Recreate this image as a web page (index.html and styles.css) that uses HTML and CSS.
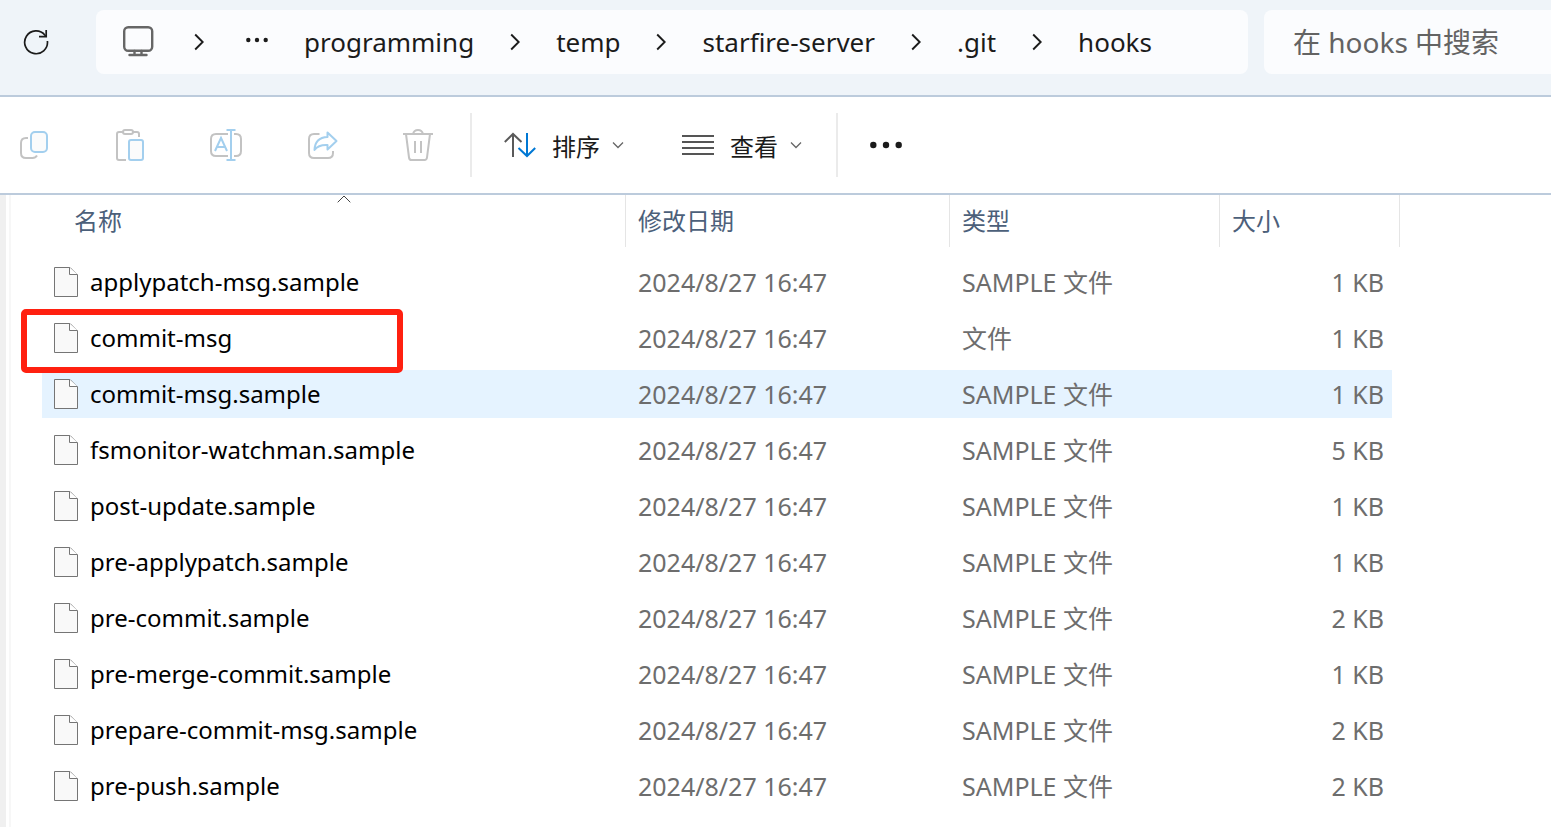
FILE: index.html
```html
<!DOCTYPE html>
<html lang="zh-CN">
<head>
  <meta charset="UTF-8">
  <meta name="viewport" content="width=device-width, initial-scale=1.0">
  <title>hooks</title>
  <link rel="stylesheet" href="styles.css">
</head>
<body>
  <!-- shared icons -->
  <svg class="defs" width="0" height="0" aria-hidden="true">
    <symbol id="chevron" viewBox="0 0 10 18"><path d="M1.2 1.500L8.700 9L1.200 16.500" fill="none" stroke="#1b1b1b" stroke-width="1.900"/></symbol>
    <symbol id="down" viewBox="0 0 12 8"><path d="M1 1.5L6 6.5L11 1.5" fill="none" stroke="#666" stroke-width="1.3"/></symbol>
    <symbol id="file" viewBox="0 0 24 30"><path d="M.5 .5H16L23.500 8V29.500H.5Z" fill="#f9f9f9" stroke="#757575"/><path d="M15.500 .5V7.500H23.500" fill="#fff" stroke="#757575"/></symbol>
  </svg>

  <header class="topbar">
    <button class="refresh" aria-label="刷新">
      <svg width="26" height="26" viewBox="0 0 26 26" fill="none" stroke="#1b1b1b" stroke-width="1.700"><path d="M24.400 12A11.400 11.400 0 1 1 22 6.200L23 7.400"/><path d="M23.200 1V7.700H16"/></svg>
    </button>
    <nav class="address">
      <svg class="pc" width="32" height="32" viewBox="0 0 32 32" fill="none" stroke="#666" stroke-width="2.400" stroke-linecap="round"><rect x="2.200" y="1.200" width="28" height="23.500" rx="4"/><path d="M12.500 25V29M19.500 25V29M7.500 29H24.500"/></svg>
      <svg width="10" height="18"><use href="#chevron"/></svg>
      <button class="dots" aria-label="更多路径"><svg width="22" height="10" viewBox="0 0 22 10" fill="#1b1b1b"><circle cx="2.300" cy="3" r="2.200"/><circle cx="11" cy="3" r="2.200"/><circle cx="19.700" cy="3" r="2.200"/></svg></button>
      <a href="#">programming</a>
      <svg width="10" height="18"><use href="#chevron"/></svg>
      <a href="#">temp</a>
      <svg width="10" height="18"><use href="#chevron"/></svg>
      <a href="#">starfire-server</a>
      <svg width="10" height="18"><use href="#chevron"/></svg>
      <a href="#">.git</a>
      <svg width="10" height="18"><use href="#chevron"/></svg>
      <a href="#">hooks</a>
    </nav>
    <input class="search" type="text" aria-label="搜索" placeholder="在 hooks 中搜索">
  </header>

  <div class="toolbar">
    <div class="tools">
      <button aria-label="复制">
        <svg width="32" height="32" viewBox="0 0 32 32" fill="none" stroke-width="2"><path d="M10 9H8Q3 9 3 14V24Q3 29 8 29H14.500Q17.500 29 19 26.500" stroke="#c3c3c3"/><rect x="13" y="3" width="16" height="20" rx="4" fill="#fbfbfb" stroke="#a3cfee"/></svg>
      </button>
      <button aria-label="粘贴">
        <svg width="32" height="32" viewBox="0 0 32 32" fill="none" stroke-width="2"><path d="M9 3H5Q3 3 3 5V29Q3 31 5 31H12M19 3H23Q25 3 25 5V8" stroke="#c3c3c3"/><rect x="9" y="1" width="10" height="4" rx="2" fill="#fff" stroke="#c3c3c3"/><rect x="15" y="11" width="14" height="20" rx="2" fill="#fbfbfb" stroke="#a3cfee"/></svg>
      </button>
      <button aria-label="重命名">
        <svg width="32" height="32" viewBox="0 0 32 32" fill="none" stroke-width="2"><path d="M18 5H6Q1 5 1 10V22Q1 27 6 27H18M24 5H26Q31 5 31 10V22Q31 27 26 27H24" stroke="#c3c3c3"/><path d="M21 1V31M16.500 1H25.500M16.500 31H25.500M5 22L11 9L17 22M7 18H15" stroke="#a3cfee"/></svg>
      </button>
      <button aria-label="共享">
        <svg width="32" height="32" viewBox="0 0 32 32" fill="none" stroke-width="2"><path d="M13.500 5H8Q3 5 3 10V24Q3 29 8 29H22Q27 29 27 24V22" stroke="#c3c3c3"/><path d="M21.500 3.500L30.500 12L21.500 20.500V16Q12.500 15.500 8.500 21Q9 8.500 21.500 8Z" stroke="#a3cfee" stroke-linejoin="round"/></svg>
      </button>
      <button aria-label="删除">
        <svg width="32" height="32" viewBox="0 0 32 32" fill="none" stroke="#c3c3c3" stroke-width="2"><path d="M1 5H31M4 5L7 28.500Q7.300 31 9.500 31H22.500Q24.700 31 25 28.500L28 5M11 5Q12 1 16 1Q20 1 21 5M13 12V24M19 12V24"/></svg>
      </button>
    </div>
    <div class="menus">
      <button class="menu">
        <svg width="32" height="26" viewBox="0 0 32 26" fill="none" stroke-width="2"><path d="M9 25V2M.8 10L9 2L17.500 10" stroke="#5a5a5a"/><path d="M23 1V24M14.500 16L23 24L31.200 16" stroke="#0078d4"/></svg>
        <span>排序</span>
        <svg width="12" height="8"><use href="#down"/></svg>
      </button>
      <button class="menu">
        <svg width="32" height="22" viewBox="0 0 32 22" fill="none" stroke="#555" stroke-width="2"><path d="M0 2H32M0 8H32M0 14H32M0 20H32"/></svg>
        <span>查看</span>
        <svg width="12" height="8"><use href="#down"/></svg>
      </button>
    </div>
    <button class="more" aria-label="更多">
      <svg width="32" height="8" viewBox="0 0 32 8" fill="#1b1b1b"><circle cx="3.300" cy="4" r="3.200"/><circle cx="16" cy="4" r="3.200"/><circle cx="28.700" cy="4" r="3.200"/></svg>
    </button>
  </div>

  <main class="content">
    <div class="splitter"></div>
    <div class="list">
      <table class="files">
        <colgroup><col><col class="col-date"><col class="col-type"><col class="col-size"></colgroup>
        <thead>
          <tr>
            <th><div class="head head-name">名称<svg class="sort" width="14" height="8" viewBox="0 0 14 8" fill="none" stroke="#444"><path d="M.7 7.300L7 1L13.300 7.300"/></svg></div></th>
            <th><div class="head">修改日期</div></th>
            <th><div class="head">类型</div></th>
            <th><div class="head">大小</div></th>
          </tr>
        </thead>
        <tbody>
          <tr><td><div class="name"><svg width="24" height="30"><use href="#file"/></svg>applypatch-msg.sample</div></td><td>2024/8/27 16:47</td><td>SAMPLE 文件</td><td>1 KB</td></tr>
          <tr class="marked"><td><div class="name"><svg width="24" height="30"><use href="#file"/></svg>commit-msg</div></td><td>2024/8/27 16:47</td><td>文件</td><td>1 KB</td></tr>
          <tr class="hover"><td><div class="name"><svg width="24" height="30"><use href="#file"/></svg>commit-msg.sample</div></td><td>2024/8/27 16:47</td><td>SAMPLE 文件</td><td>1 KB</td></tr>
          <tr><td><div class="name"><svg width="24" height="30"><use href="#file"/></svg>fsmonitor-watchman.sample</div></td><td>2024/8/27 16:47</td><td>SAMPLE 文件</td><td>5 KB</td></tr>
          <tr><td><div class="name"><svg width="24" height="30"><use href="#file"/></svg>post-update.sample</div></td><td>2024/8/27 16:47</td><td>SAMPLE 文件</td><td>1 KB</td></tr>
          <tr><td><div class="name"><svg width="24" height="30"><use href="#file"/></svg>pre-applypatch.sample</div></td><td>2024/8/27 16:47</td><td>SAMPLE 文件</td><td>1 KB</td></tr>
          <tr><td><div class="name"><svg width="24" height="30"><use href="#file"/></svg>pre-commit.sample</div></td><td>2024/8/27 16:47</td><td>SAMPLE 文件</td><td>2 KB</td></tr>
          <tr><td><div class="name"><svg width="24" height="30"><use href="#file"/></svg>pre-merge-commit.sample</div></td><td>2024/8/27 16:47</td><td>SAMPLE 文件</td><td>1 KB</td></tr>
          <tr><td><div class="name"><svg width="24" height="30"><use href="#file"/></svg>prepare-commit-msg.sample</div></td><td>2024/8/27 16:47</td><td>SAMPLE 文件</td><td>2 KB</td></tr>
          <tr><td><div class="name"><svg width="24" height="30"><use href="#file"/></svg>pre-push.sample</div></td><td>2024/8/27 16:47</td><td>SAMPLE 文件</td><td>2 KB</td></tr>
        </tbody>
      </table>
    </div>
  </main>
</body>
</html>
```
FILE: styles.css
```css
* {
  box-sizing: border-box;
}
body {
  margin: 0;
  min-height: 100vh;
  display: flex;
  flex-direction: column;
  background: #fff;
  color: #1b1b1b;
  font-family: "Noto Sans", "Noto Sans CJK SC", sans-serif;
  font-size: 25px;
}
.defs {
  position: absolute;
}
svg {
  flex-shrink: 0;
}
button {
  display: flex;
  align-items: center;
  padding: 0;
  border: none;
  background: none;
  color: inherit;
  font: inherit;
  cursor: pointer;
}

/* address bar */
.topbar {
  display: flex;
  height: 97px;
  padding: 10px 0 21px 23px;
  background: #eff4f9;
  border-bottom: 2px solid #bccbdc;
}
.refresh {
  margin-right: 47px;
}
.address {
  flex: 1;
  display: flex;
  align-items: center;
  gap: 36px;
  padding-left: 26px;
  background: #fbfcfe;
  border-radius: 8px;
  font-size: 26px;
  white-space: nowrap;
}
.address a {
  color: inherit;
  text-decoration: none;
}
.pc {
  margin-right: 4px;
}
.dots {
  margin-left: 6px;
}
.search {
  width: 287px;
  margin-left: 16px;
  padding: 0 0 0 29px;
  border: none;
  border-radius: 8px 0 0 8px;
  background: #fbfcfe;
  font-family: inherit;
  font-size: 28px;
}
.search::placeholder {
  color: #636363;
  opacity: 1;
}

/* toolbar */
.toolbar {
  display: flex;
  align-items: center;
  height: 98px;
  padding-left: 18px;
  border-bottom: 2px solid #bccbdc;
}
.tools {
  display: flex;
  gap: 64px;
  padding-right: 36px;
}
.menus {
  display: flex;
  align-items: center;
  gap: 58px;
  height: 64px;
  padding: 0 34px 0 32px;
  border-left: 2px solid #ebebeb;
  border-right: 2px solid #ebebeb;
}
.menu {
  gap: 12px;
  font-size: 24px;
}
.menu span {
  margin-left: 4px;
}
.more {
  margin-left: 32px;
}

/* file list */
.content {
  flex: 1;
  display: flex;
}
.splitter {
  width: 11px;
  border-left: 6px solid #f0f0f0;
  border-right: 2px solid #f7f7f7;
}
.list {
  flex: 1;
  padding: 0 151px 0 31px;
}
.files {
  width: 100%;
  table-layout: fixed;
  border-spacing: 0;
  color: #6d6d6d;
}
.col-date {
  width: 324px;
}
.col-type {
  width: 270px;
}
.col-size {
  width: 180px;
}
.files th {
  height: 59px;
  padding: 0;
  vertical-align: top;
  text-align: left;
  font-weight: normal;
  font-size: 24px;
  color: #4c607a;
}
.head {
  position: relative;
  height: 52px;
  padding-left: 12px;
  border-right: 1px solid #e5e5e5;
  line-height: 52px;
}
.head-name {
  margin-left: 20px;
}
.sort {
  position: absolute;
  top: 0;
  left: calc(50% - 7px);
}
.files td {
  height: 56px;
  padding: 0 0 0 12px;
  border: solid transparent;
  border-width: 4px 0;
  background-clip: padding-box;
  line-height: 48px;
  white-space: nowrap;
}
.files td:last-child {
  padding-right: 8px;
  border-right-width: 8px;
  text-align: right;
}
.name {
  display: flex;
  align-items: center;
  gap: 12px;
  color: #000;
  font-size: 24px;
}
.hover td {
  background-color: #e5f3ff;
}
.marked td:first-child {
  position: relative;
}
/* red frame around the hook file */
.marked td:first-child::after {
  content: "";
  position: absolute;
  top: -5px;
  left: -21px;
  box-sizing: border-box;
  width: 382px;
  height: 64px;
  border: 6px solid #ff2010;
  border-radius: 5px;
}
```
